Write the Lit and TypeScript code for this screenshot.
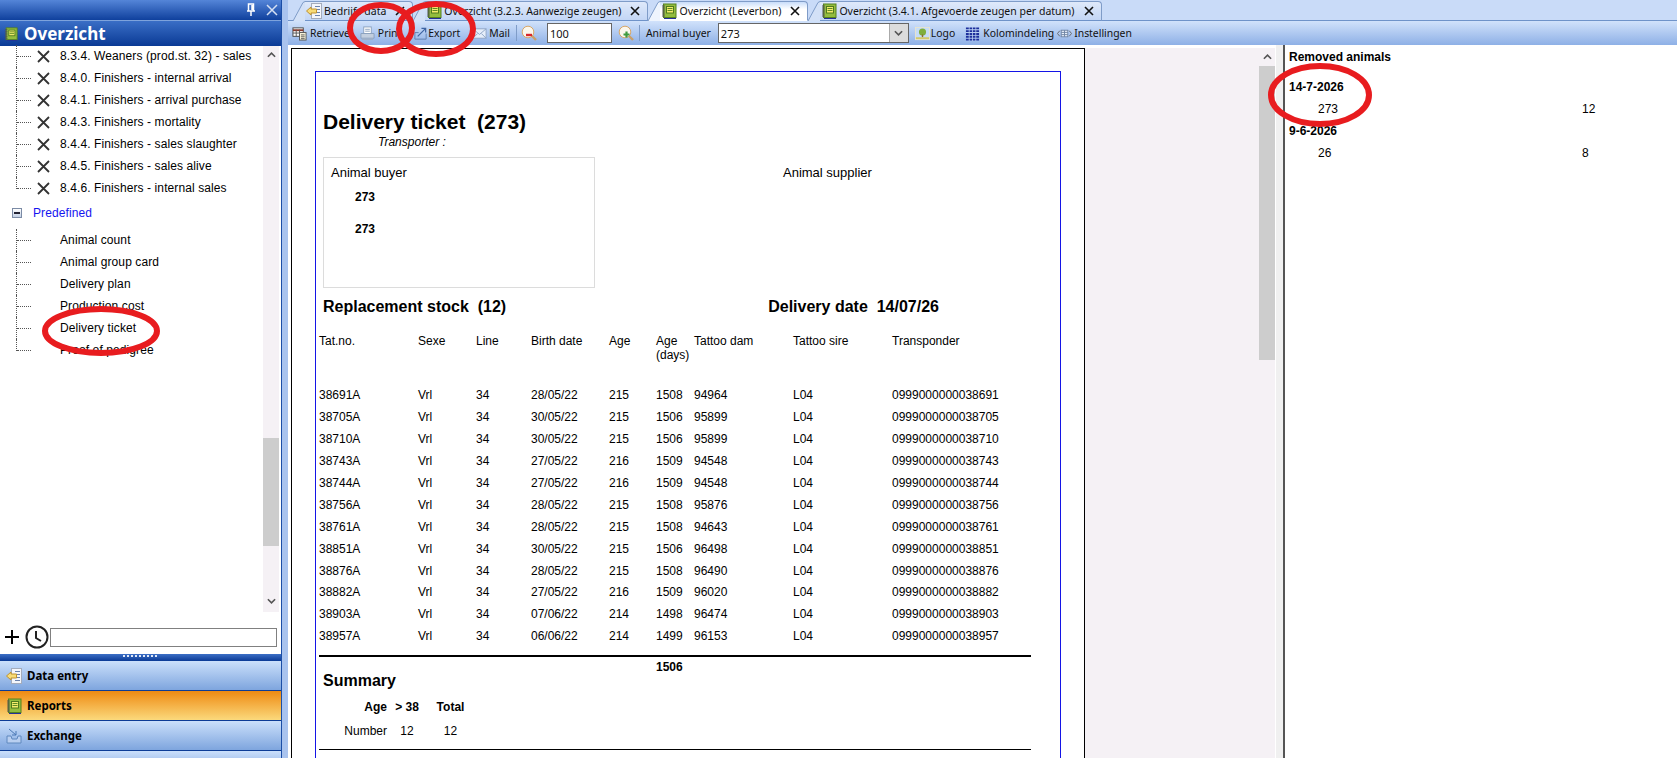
import { LitElement, css, html, svg } from "lit";
import { customElement } from "lit/decorators.js";

const notebook = html`<svg class="ico" viewBox="0 0 16 16">
  <rect x="2.500" y="1" width="12.500" height="13.500" fill="#93bd3e" stroke="#54801f"/>
  <rect x="5.500" y="3.500" width="7" height="6.500" fill="#f5ec6c" stroke="#4f7a1e"/>
  <path d="M6.500 5.500h5M6.500 7.500h5" stroke="#5d8a24"/>
  <path d="M3 15.500h12" stroke="#24309a"/>
  <path d="M1 3h3M1 5h3M1 7h3M1 9h3M1 11h3M1 13h3" stroke="#555"/>
</svg>`;

const dataEntry = html`<svg class="ico" viewBox="0 0 16 16">
  <rect x="5.500" y="0.500" width="10" height="15" fill="#f4f6fb" stroke="#a4acbc"/>
  <path d="M9 3.500h5M11 6.500h3M11 9.500h3M9 12.500h5" stroke="#6c83ad"/>
  <path d="M0.500 8l4.500-4v2h5.500v4H5v2z" fill="#f8dc78" stroke="#c0922f"/>
</svg>`;

const exchange = html`<svg class="ico" viewBox="0 0 16 16">
  <path d="M1 8h4l1 3h5l1-3h3v7H1z" fill="#b9cff0" stroke="#5f88be"/>
  <path d="M3 1l7 6M10 3v4H6" fill="none" stroke="#4a78b5"/>
</svg>`;

const closeX = html`<svg class="tab-x" viewBox="0 0 10 10"><path d="M1 1l8 8M9 1l-8 8" stroke="#111" stroke-width="1.6"/></svg>`;

const tabs = [
  { label: "Bedrijfs data", icon: dataEntry },
  { label: "Overzicht (3.2.3. Aanwezige zeugen)", icon: notebook },
  { label: "Overzicht (Leverbon)", icon: notebook, active: true },
  { label: "Overzicht (3.4.1. Afgevoerde zeugen per datum)", icon: notebook },
];

const firstGroup = [
  "8.3.4. Weaners (prod.st. 32) - sales",
  "8.4.0. Finishers - internal arrival",
  "8.4.1. Finishers - arrival purchase",
  "8.4.3. Finishers - mortality",
  "8.4.4. Finishers - sales slaughter",
  "8.4.5. Finishers - sales alive",
  "8.4.6. Finishers - internal sales",
];

const predefined = [
  "Animal count",
  "Animal group card",
  "Delivery plan",
  "Production cost",
  "Delivery ticket",
  "Proof of pedigree",
];

const columns = ["Tat.no.", "Sexe", "Line", "Birth date", "Age", "Age (days)", "Tattoo dam", "Tattoo sire", "Transponder"];

const rows = [
  ["38691A", "28/05/22", "215", "1508", "94964"],
  ["38705A", "30/05/22", "215", "1506", "95899"],
  ["38710A", "30/05/22", "215", "1506", "95899"],
  ["38743A", "27/05/22", "216", "1509", "94548"],
  ["38744A", "27/05/22", "216", "1509", "94548"],
  ["38756A", "28/05/22", "215", "1508", "95876"],
  ["38761A", "28/05/22", "215", "1508", "94643"],
  ["38851A", "30/05/22", "215", "1506", "96498"],
  ["38876A", "28/05/22", "215", "1508", "96490"],
  ["38882A", "27/05/22", "216", "1509", "96020"],
  ["38903A", "07/06/22", "214", "1498", "96474"],
  ["38957A", "06/06/22", "214", "1499", "96153"],
];

const chevron = (up: boolean) =>
  html`<svg class="chev" viewBox="0 0 10 6"><path d="${up ? "M1 5l4-4 4 4" : "M1 1l4 4 4-4"}" fill="none" stroke="#555" stroke-width="1.8"/></svg>`;

const lens = (mark: unknown) => html`<svg class="ico" viewBox="0 0 16 16">
  <circle cx="7" cy="7" r="5.800" fill="#fbf7ec" stroke="#d8a868"/>
  <path d="M11 11l4 4" stroke="#c9a06a" stroke-width="2.400"/>
  ${mark}
</svg>`;

// the red marker circles somebody drew on top of the screenshot
const marks = [
  [381, 28, 31, 23],
  [436, 29, 37, 25],
  [101, 331, 56, 22],
  [1320, 95, 49, 29],
];

@customElement("app-root")
export class AppRoot extends LitElement {
  static styles = css`
    :host {
      display: block;
      position: relative;
      width: 1677px;
      height: 758px;
      overflow: hidden;
      background: #fff;
      font-family: "Liberation Sans", Arial, sans-serif;
      font-size: 12px;
      color: #000;
    }
    .app {
      display: flex;
      height: 100%;
    }
    .side {
      width: 281px;
      flex: none;
      display: flex;
      flex-direction: column;
      border-right: 1px solid #1b4ea6;
      box-sizing: content-box;
      height: 758px;
    }
    .caption {
      height: 20px;
      flex: none;
      display: flex;
      align-items: center;
      justify-content: flex-end;
      gap: 10px;
      padding-right: 3px;
      background: linear-gradient(#5485d8, #0f409d);
      border-bottom: 1px solid #7ea3dc;
    }
    .title {
      height: 25px;
      flex: none;
      display: flex;
      align-items: center;
      gap: 6px;
      padding-left: 4px;
      background: linear-gradient(#3a6ec6, #0a3a95);
      color: #fff;
      font: bold 17px "Noto Sans", sans-serif;
    }
    .title .ico {
      width: 14px;
      height: 14px;
    }
    .tree-wrap {
      flex: 1;
      display: flex;
      min-height: 0;
    }
    .tree {
      flex: 1;
      margin-top: -1px;
      letter-spacing: 0.1px;
    }
    .group-gap {
      height: 3px;
    }
    .row {
      height: 22px;
      display: flex;
      align-items: center;
      padding-left: 16px;
      position: relative;
    }
    .conn {
      width: 15px;
      height: 100%;
      flex: none;
      border-left: 1px dotted #555;
      position: relative;
      box-sizing: border-box;
    }
    .conn::after {
      content: "";
      position: absolute;
      left: 0;
      right: 0;
      top: 11px;
      border-top: 1px dotted #555;
    }
    .row:last-child .conn {
      height: 12px;
      align-self: flex-start;
    }
    .x {
      width: 13px;
      height: 13px;
      margin: 0 10px 0 6px;
      flex: none;
    }
    .plain {
      margin-left: 29px;
    }
    .expander {
      height: 22px;
      display: flex;
      align-items: center;
      padding-left: 12px;
      color: #1414f0;
    }
    .box {
      width: 8px;
      height: 8px;
      margin-right: 11px;
      border: 1px solid #7b8ba5;
      background: linear-gradient(#fff, #c3d0e5);
      display: flex;
      align-items: center;
      justify-content: center;
      box-sizing: content-box;
    }
    .box i {
      width: 6px;
      height: 2px;
      background: #223;
    }
    .pre {
      margin-top: 5px;
    }
    .vscroll {
      width: 16px;
      flex: none;
      margin-right: 2px;
      background: #f5f1f5;
      display: flex;
      flex-direction: column;
      align-items: center;
    }
    .chev {
      width: 9px;
      height: 6px;
      flex: none;
    }
    .vscroll .chev:first-child {
      margin: 6px 0;
    }
    .thumb-space {
      flex: 1;
      width: 100%;
    }
    .side .thumb-space {
      padding-top: 374px;
      box-sizing: border-box;
    }
    .thumb {
      width: 100%;
      background: #cdcdcd;
    }
    .side .thumb {
      height: 108px;
    }
    .vscroll .chev:last-child {
      margin: 6px 0 8px;
    }
    .search {
      height: 42px;
      flex: none;
      box-sizing: border-box;
      display: flex;
      align-items: center;
      padding: 8px 4px 0 4px;
    }
    .search svg {
      flex: none;
    }
    .clock {
      margin-left: 5px;
    }
    .search .field {
      flex: 1;
      height: 17px;
      border: 1px solid #808080;
      margin-left: 1px;
    }
    .grip {
      height: 7px;
      flex: none;
      background: linear-gradient(#3c6fc6, #0a3a95);
      display: flex;
      justify-content: center;
      align-items: flex-start;
      padding-top: 1px;
      box-sizing: border-box;
    }
    .grip i {
      width: 35px;
      height: 2px;
      background: repeating-linear-gradient(90deg, #dfe8f8 0 2px, transparent 2px 4px);
    }
    .nav {
      height: 30px;
      flex: none;
      box-sizing: border-box;
      display: flex;
      align-items: center;
      gap: 5px;
      padding-left: 6px;
      border-bottom: 1px solid #0d3c96;
      background: linear-gradient(#cbe0fb, #7ea5de);
      font: bold 11.5px "Noto Sans", sans-serif;
    }
    .nav.on {
      background: linear-gradient(#ee8a12, #fbd97c);
    }
    .nav.rest {
      height: 7px;
      border-bottom: 0;
      background: linear-gradient(#cbe0fb, #b4cdf2);
    }
    .ico {
      width: 16px;
      height: 16px;
      flex: none;
    }
    .main {
      flex: 1;
      min-width: 0;
      display: flex;
      flex-direction: column;
      border-left: 6px solid #a9c3ee;
      box-sizing: border-box;
    }
    .strip {
      height: 20px;
      flex: none;
      display: flex;
      align-items: flex-end;
      padding-left: 5px;
      background: #c9dbf8;
      border-bottom: 1px solid #6f93c9;
      box-sizing: content-box;
    }
    .tab {
      display: flex;
      height: 20px;
      margin-bottom: -1px;
      font: 10.5px "Noto Sans", sans-serif;
      color: #111;
    }
    .slant {
      width: 12px;
      height: 20px;
      flex: none;
    }
    .tab-body {
      display: flex;
      align-items: center;
      gap: 2px;
      padding: 0 7px 0 1px;
      background: linear-gradient(#dfe9fa, #c3d6f5);
      border-top: 1px solid #7f9cc8;
      border-right: 1px solid #7f9cc8;
      border-top-right-radius: 4px;
      border-bottom: 1px solid #6f93c9;
    }
    .tab.active .tab-body {
      background: linear-gradient(#c9ddfa, #fff 40%);
      border-bottom-color: #fff;
    }
    .tab-x {
      width: 10px;
      height: 10px;
      margin-left: 7px;
    }
    .toolbar {
      height: 24px;
      flex: none;
      display: flex;
      align-items: center;
      padding-left: 4px;
      background: linear-gradient(#d1e2fb, #8eb0e6);
      font: 10.4px "Noto Sans", sans-serif;
      color: #111;
    }
    .tool {
      display: flex;
      align-items: center;
      gap: 3px;
      white-space: nowrap;
    }
    .tool .ico {
      width: 15px;
      height: 15px;
    }
    .t-retrieve {
      margin-right: 10px;
    }
    .t-print {
      margin-right: 12px;
    }
    .t-export {
      gap: 0;
      margin-right: 12px;
    }
    .t-mail {
      gap: 2px;
      margin-right: 6px;
    }
    .t-logo {
      gap: 1px;
      margin-right: 10px;
    }
    .t-kolom {
      margin-right: 3px;
    }
    .t-inst {
      gap: 2px;
    }
    .sep {
      width: 1px;
      height: 16px;
      background: #7f9cc8;
      margin-right: 4px;
    }
    .sep.after-zoom {
      margin: 0 6px 0 5px;
    }
    .input {
      height: 18px;
      border: 1px solid #666;
      background: #fff;
      box-sizing: content-box;
      display: flex;
      align-items: center;
      padding-left: 2px;
      font-size: 11px;
    }
    .zoomval {
      width: 61px;
      margin: 0 6px 0 10px;
    }
    .combo {
      width: 187px;
      margin: 0 6px 0 7px;
      justify-content: space-between;
    }
    .drop {
      width: 18px;
      height: 18px;
      background: #dcdcdc;
      border-left: 1px solid #aaa;
      display: flex;
      align-items: center;
      justify-content: center;
    }
    .body {
      flex: 1;
      min-height: 0;
      display: flex;
    }
    .viewer {
      width: 988px;
      flex: none;
      display: flex;
      padding-top: 3px;
      box-sizing: border-box;
    }
    .page-area {
      width: 968px;
      flex: none;
      margin-left: 3px;
      background: #f5f1f5;
    }
    .page {
      width: 794px;
      height: 720px;
      box-sizing: border-box;
      background: #fff;
      border: 1px solid #000;
      border-bottom: 0;
      padding: 22px 0 0 23px;
      overflow: hidden;
    }
    .sheet {
      width: 746px;
      height: 800px;
      box-sizing: border-box;
      border: 1px solid #1414e6;
      padding: 37px 0 0 3px;
    }
    h1 {
      margin: 0 0 0 4px;
      font-size: 21px;
      line-height: 25px;
      white-space: pre;
    }
    .transporter {
      margin-left: 59px;
      line-height: 16px;
      font-style: italic;
    }
    .parties {
      display: flex;
      margin: 7px 0 0 4px;
      height: 131px;
    }
    .party {
      width: 272px;
      box-sizing: border-box;
      border: 1px solid #dcdcdc;
      padding: 7px 7px;
      font-size: 13px;
      line-height: 16px;
    }
    .party b {
      display: block;
      font-size: 12px;
      margin: 8px 0 16px 24px;
    }
    .supplier {
      margin-left: 188px;
      padding-top: 8px;
      font-size: 13px;
      line-height: 16px;
    }
    h2 {
      margin: 10px 0 0 4px;
      height: 18px;
      font-size: 16px;
      line-height: 18px;
      display: flex;
      white-space: pre;
    }
    h2 span:last-child {
      margin-left: 262px;
    }
    .grid {
      display: grid;
      grid-template-columns: 99px 58px 55px 78px 47px 38px 99px 99px 140px;
    }
    .head {
      margin-top: 18px;
      height: 51px;
      line-height: 14px;
    }
    .line {
      height: 21.95px;
      line-height: 21.95px;
    }
    .rule {
      width: 712px;
      height: 1.5px;
      background: #000;
    }
    .r1 {
      margin-top: 7px;
    }
    .totals {
      height: 15px;
      line-height: 20px;
      padding-left: 337px;
      font-weight: bold;
    }
    h3 {
      margin: 0 0 0 4px;
      font-size: 16px;
      line-height: 18px;
    }
    .sum {
      display: grid;
      grid-template-columns: 68px 40px 47px;
      line-height: 14px;
      margin-top: 10px;
      text-align: center;
    }
    .sum > :first-child {
      text-align: right;
    }
    .sum.bold {
      font-weight: bold;
    }
    .r2 {
      margin-top: 11px;
    }
    .viewer .vscroll {
      margin-right: 0;
      background: #f5f1f5;
    }
    .viewer .thumb {
      height: 294px;
    }
    .splitter {
      width: 9px;
      flex: none;
      background: #f0f0f0;
      border-right: 2px solid #555;
      box-sizing: border-box;
    }
    .removed {
      flex: 1;
      padding: 1px 0 0 4px;
      position: relative;
    }
    .removed .l {
      height: 22px;
      line-height: 22px;
      display: flex;
    }
    .removed .hd {
      margin-bottom: 8px;
    }
    .removed .num {
      width: 264px;
      margin-left: 29px;
    }
    .marks {
      position: absolute;
      inset: 0;
      pointer-events: none;
    }
  `;

  renderTabs() {
    return tabs.map(
      (t) => html`<div class="tab ${t.active ? "active" : ""}">
        <svg class="slant" viewBox="0 0 12 20">
          <path d="M0 20L10 1.500 12 .500V20z" fill="${t.active ? "#eef4fd" : "#d3e1f7"}"/>
          <path d="M0 20L10 1.500 12 .500" fill="none" stroke="#7f9cc8"/>
        </svg>
        <div class="tab-body">${t.icon}<span>${t.label}</span>${closeX}</div>
      </div>`
    );
  }

  renderToolbar() {
    return html`<div class="toolbar">
      <div class="tool t-retrieve">
        <svg class="ico" viewBox="0 0 16 16">
          <rect x="1" y="2" width="11" height="9" fill="#fff" stroke="#444"/>
          <path d="M1 4.500h11" stroke="#8a3b2e" stroke-width="2"/>
          <path d="M1 7.500h11M4.500 4v7M8 4v7" stroke="#555"/>
          <rect x="8" y="7" width="7" height="8" fill="#fdf6dc" stroke="#555"/>
          <path d="M9.500 9.500h4M9.500 11.500h4M9.500 13.500h4" stroke="#555"/>
        </svg>
        Retrieve
      </div>
      <div class="tool t-print">
        <svg class="ico" viewBox="0 0 16 16">
          <rect x="4" y="1" width="8" height="7" fill="#fff" stroke="#8aa0bd"/>
          <path d="M5.500 3.500h5M5.500 5.500h5" stroke="#8aa0bd"/>
          <path d="M1 8h14v5H1z" fill="#c3cfdf" stroke="#8aa0bd"/>
          <path d="M2 13h12v2H2z" fill="#9fb0c8"/>
        </svg>
        Print
      </div>
      <div class="tool t-export">
        <svg class="ico" viewBox="0 0 16 16">
          <path d="M2 14V7h4M2 14h12V8" fill="none" stroke="#5f7fae"/>
          <path d="M5 11l8-8M9 2.500h4.500V7" fill="none" stroke="#3e64a3" stroke-width="1.300"/>
        </svg>
        Export
      </div>
      <div class="tool t-mail">
        <svg class="ico" viewBox="0 0 16 16">
          <rect x="1" y="3" width="14" height="10" fill="#e6eefa" stroke="#8fa5c6"/>
          <path d="M1 3l7 6 7-6M1 13l5-5M15 13l-5-5" fill="none" stroke="#8fa5c6"/>
        </svg>
        Mail
      </div>
      <div class="sep"></div>
      ${lens(svg`<path d="M5 10h6" stroke="#d8262c" stroke-width="2.400"/>`)}
      <div class="input zoomval">100</div>
      ${lens(svg`<path d="M8.500 6.500v6M5.500 9.500h6" stroke="#3f9a3f" stroke-width="2.200"/>`)}
      <div class="sep after-zoom"></div>
      <span>Animal buyer</span>
      <div class="input combo">
        273
        <div class="drop">${chevron(false)}</div>
      </div>
      <div class="tool t-logo">
        <svg class="ico" viewBox="0 0 16 16">
          <rect x="0.500" y="1.500" width="15" height="13" fill="#c6dcf7" stroke="#e8e4cf"/>
          <circle cx="8" cy="6.500" r="3.800" fill="#7fae3c"/>
          <path d="M8 9v3" stroke="#8a6a30" stroke-width="1.500"/>
          <path d="M1 12h14v2H1z" fill="#d3c968"/>
        </svg>
        Logo
      </div>
      <div class="tool t-kolom">
        <svg class="ico" viewBox="0 0 16 16">
          <path d="M1 2.500h14M1 5.500h14M1 8.500h14M1 11.500h14M1 14.500h14" stroke="#1c2f9c" stroke-width="2"/>
          <path d="M4.500 1v15M8 1v15M11.500 1v15" stroke="#c0d4f2" stroke-width="0.800"/>
        </svg>
        Kolomindeling
      </div>
      <div class="tool t-inst">
        <svg class="ico" viewBox="0 0 16 16">
          <path d="M3 5L0.500 8 3 11M13 5l2.500 3L13 11" fill="none" stroke="#666"/>
          <rect x="4.500" y="4.500" width="7" height="7" fill="#e9f0fa" stroke="#6f84a4"/>
          <path d="M4.500 6.800h7M4.500 9.200h7M8 4.500v7" stroke="#6f84a4"/>
        </svg>
        Instellingen
      </div>
    </div>`;
  }

  renderReport() {
    return html`<div class="page">
      <div class="sheet">
        <h1>Delivery ticket  (273)</h1>
        <div class="transporter">Transporter :</div>
        <div class="parties">
          <div class="party">Animal buyer<b>273</b><b>273</b></div>
          <div class="supplier">Animal supplier</div>
        </div>
        <h2><span>Replacement stock  (12)</span><span>Delivery date  14/07/26</span></h2>
        <div class="grid head">${columns.map((c) => html`<div>${c}</div>`)}</div>
        ${rows.map(
          (r) => html`<div class="grid line">
            <div>${r[0]}</div>
            <div>Vrl</div>
            <div>34</div>
            <div>${r[1]}</div>
            <div>${r[2]}</div>
            <div>${r[3]}</div>
            <div>${r[4]}</div>
            <div>L04</div>
            <div>09990000000${r[0].slice(0, 5)}</div>
          </div>`
        )}
        <div class="rule r1"></div>
        <div class="totals">1506</div>
        <h3>Summary</h3>
        <div class="sum bold"><div>Age</div><div>&gt; 38</div><div>Total</div></div>
        <div class="sum"><div>Number</div><div>12</div><div>12</div></div>
        <div class="rule r2"></div>
      </div>
    </div>`;
  }

  render() {
    return html`<div class="app">
        <aside class="side">
          <div class="caption">
            <svg width="10" height="14" viewBox="0 0 10 14">
              <path d="M2.500 1h5v7h-5zM1 8h8M5 8v5M6 2v5" fill="none" stroke="#fff" stroke-width="1.500"/>
            </svg>
            <svg width="12" height="12" viewBox="0 0 12 12">
              <path d="M1 1l10 10M11 1L1 11" stroke="#d5e0f3" stroke-width="1.500"/>
            </svg>
          </div>
          <div class="title">${notebook}Overzicht</div>
          <div class="tree-wrap">
            <div class="tree">
              <div>
                ${firstGroup.map(
                  (t) => html`<div class="row">
                    <div class="conn"></div>
                    <svg class="x" viewBox="0 0 13 13"><path d="M1 1l11 11M12 1L1 12" stroke="#333" stroke-width="1.800"/></svg>
                    ${t}
                  </div>`
                )}
              </div>
              <div class="group-gap"></div>
              <div class="expander"><div class="box"><i></i></div>Predefined</div>
              <div class="pre">
                ${predefined.map((t) => html`<div class="row"><div class="conn"></div><span class="plain">${t}</span></div>`)}
              </div>
            </div>
            <div class="vscroll">
              ${chevron(true)}
              <div class="thumb-space"><div class="thumb"></div></div>
              ${chevron(false)}
            </div>
          </div>
          <div class="search">
            <svg width="16" height="16" viewBox="0 0 16 16"><path d="M8 1v14M1 8h14" stroke="#000" stroke-width="2"/></svg>
            <svg class="clock" width="24" height="24" viewBox="0 0 24 24">
              <circle cx="12" cy="12" r="10.500" fill="none" stroke="#222" stroke-width="2"/>
              <path d="M11 6v7l5 3" fill="none" stroke="#222" stroke-width="2"/>
            </svg>
            <div class="field"></div>
          </div>
          <div class="grip"><i></i></div>
          <div class="nav">${dataEntry}Data entry</div>
          <div class="nav on">${notebook}Reports</div>
          <div class="nav">${exchange}Exchange</div>
          <div class="nav rest"></div>
        </aside>
        <main class="main">
          <div class="strip">${this.renderTabs()}</div>
          ${this.renderToolbar()}
          <div class="body">
            <div class="viewer">
              <div class="page-area">${this.renderReport()}</div>
              <div class="vscroll">
                ${chevron(true)}
                <div class="thumb-space"><div class="thumb"></div></div>
              </div>
            </div>
            <div class="splitter"></div>
            <div class="removed">
              <div class="l hd"><b>Removed animals</b></div>
              <div class="l"><b>14-7-2026</b></div>
              <div class="l"><span class="num">273</span>12</div>
              <div class="l"><b>9-6-2026</b></div>
              <div class="l"><span class="num">26</span>8</div>
            </div>
          </div>
        </main>
      </div>
      <svg class="marks" width="1677" height="758">
        ${marks.map(
          ([cx, cy, rx, ry]) =>
            svg`<ellipse cx="${cx}" cy="${cy}" rx="${rx}" ry="${ry}" fill="none" stroke="#e81c1f" stroke-width="6"/>`
        )}
      </svg>`;
  }
}
